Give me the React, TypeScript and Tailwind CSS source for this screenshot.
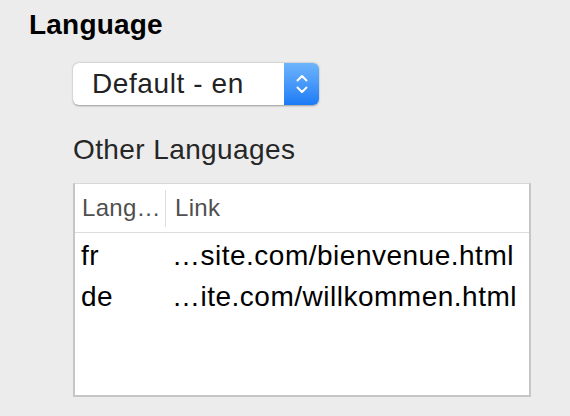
import React from "react";

const font = { fontFamily: '"Liberation Sans", Arial, sans-serif' };

function Chevrons() {
  return (
    <svg width="12" height="24" viewBox="0 0 12 24" fill="none">
      <path d="M1.5 8.5 L6 4 L10.5 8.5" stroke="white" strokeWidth="2" strokeLinecap="round" strokeLinejoin="round" />
      <path d="M1.5 15.5 L6 20 L10.5 15.5" stroke="white" strokeWidth="2" strokeLinecap="round" strokeLinejoin="round" />
    </svg>
  );
}

const rows = [
  { lang: "fr", link: "…site.com/bienvenue.html" },
  { lang: "de", link: "…ite.com/willkommen.html" },
];

export default function App() {
  return (
    <div className="w-[570px] h-[416px] bg-[#ececec] overflow-hidden" style={font}>
      <div className="pl-[29px] pt-[10px]">
        <div className="text-[28px] leading-[30px] font-bold text-black tracking-[0.2px]">Language</div>
      </div>
      <div className="pl-[73px] pt-[23px] flex flex-col">
        <div className="w-[246px] h-[42px] flex rounded-[6px] bg-white shadow-[0_0.5px_2px_rgba(0,0,0,0.35)] overflow-hidden">
          <div className="flex-1 pl-[19px] flex items-center text-[28px] text-[#222] tracking-[0.6px]">Default - en</div>
          <div className="w-[35px] flex items-center justify-center bg-gradient-to-b from-[#6db4fb] to-[#1a7bf6]">
            <Chevrons />
          </div>
        </div>
        <div className="mt-[30px] text-[28px] leading-[30px] text-[#262626] tracking-[0.4px]">Other Languages</div>
        <div className="mt-[18px] w-[458px] h-[214px] bg-white border-2 border-[#c6c6c6] border-t-[#d8d8d8] border-t-[1px] flex flex-col">
          <div className="h-[49px] shrink-0 flex items-center border-b border-[#dcdcdc] text-[24px] text-[#4f4f4f] tracking-[0.3px]">
            <div className="w-[90px] pl-[7px] h-full flex items-center">Lang…</div>
            <div className="w-[1px] h-[37px] bg-[#dcdcdc]"></div>
            <div className="pl-[9px]">Link</div>
          </div>
          <div className="pt-[2px] flex flex-col text-[28px] text-black tracking-[0.5px]">
            {rows.map((r) => (
              <div key={r.lang} className="h-[41px] flex items-center">
                <div className="w-[97px] pl-[6px]">{r.lang}</div>
                <div>{r.link}</div>
              </div>
            ))}
          </div>
        </div>
      </div>
    </div>
  );
}
